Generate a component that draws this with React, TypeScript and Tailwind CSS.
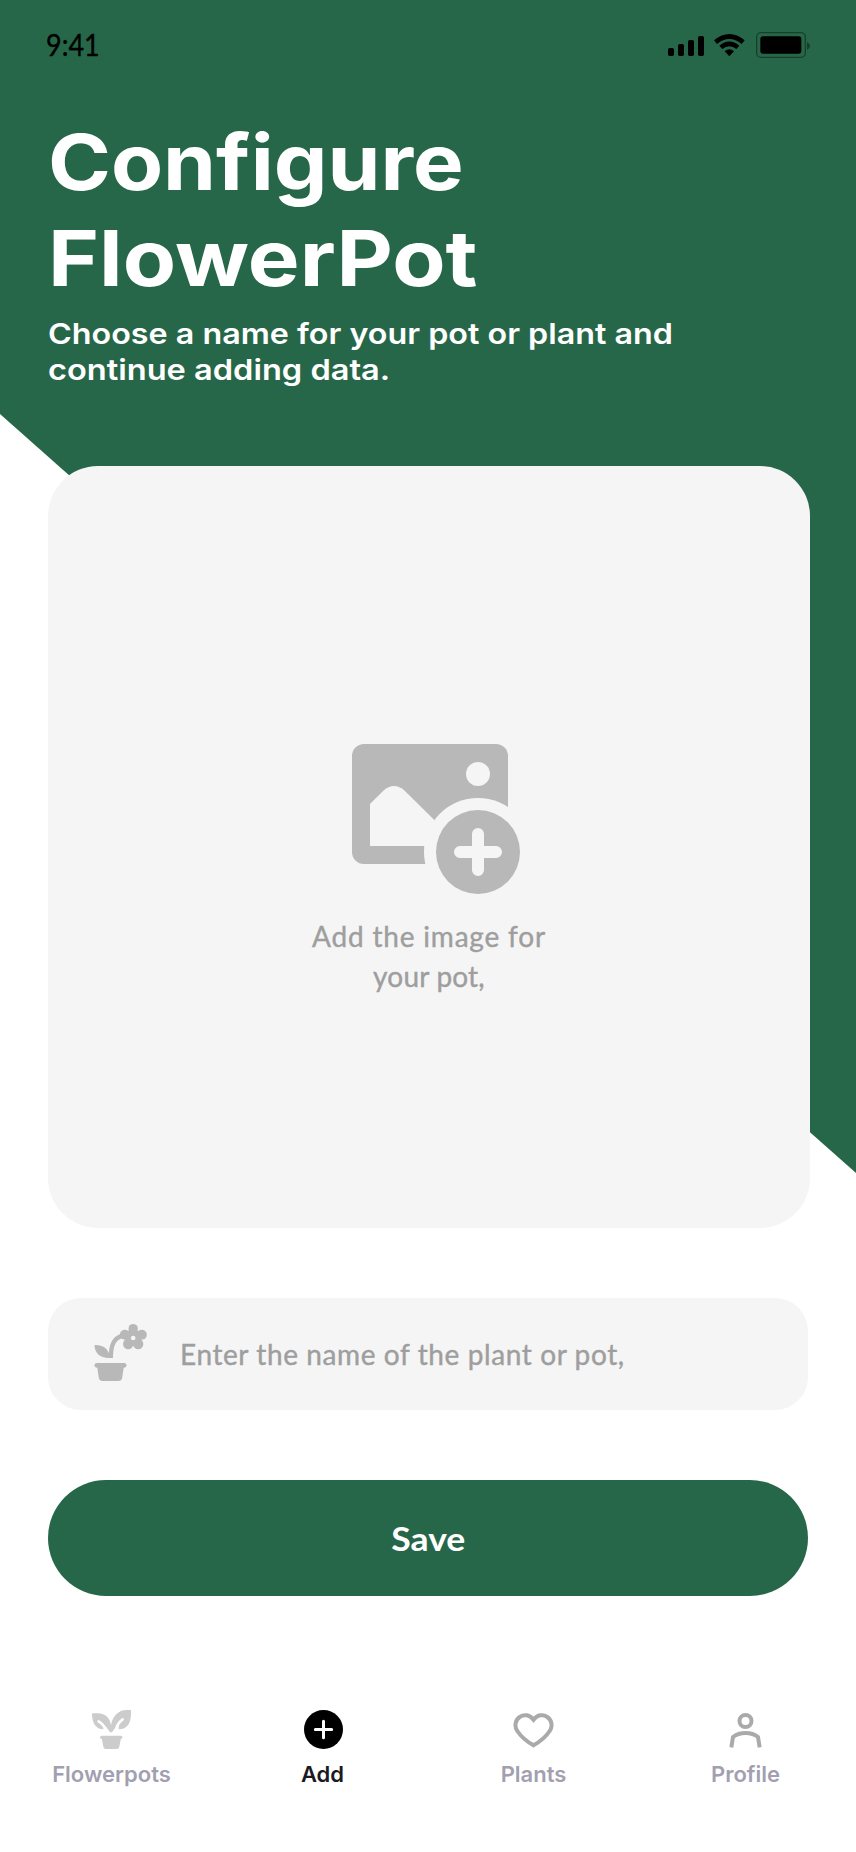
import type { ReactNode } from "react";

function StatusIcons() {
  return (
    <svg width="142" height="26" viewBox="54 36 426 78" aria-hidden="true">
      <rect x="54" y="84" width="18" height="24" rx="5" />
      <rect x="84" y="72" width="18" height="36" rx="5" />
      <rect x="114" y="60" width="18" height="48" rx="5" />
      <rect x="144" y="48" width="18" height="60" rx="5" />
      <path d="M192 61Q238 23 284 61L275 72Q238 42 201 72Z" />
      <path d="M208 77Q238 52 268 77L259 87Q238 71 217 87Z" />
      <path d="M224 94Q238 81 252 94L238 109Z" />
      <rect x="320" y="38" width="146" height="74" rx="13" fill="none" stroke="#000" strokeOpacity=".38" strokeWidth="4" />
      <rect x="331" y="49" width="123" height="52" rx="8" />
      <path d="M471 66Q480 70 480 78T471 90Z" opacity=".4" />
    </svg>
  );
}

function ImagePlusIcon() {
  return (
    <svg width="168" height="150" viewBox="0 0 504 450" aria-hidden="true">
      <rect width="468" height="360" rx="36" fill="#b8b8b8" />
      <circle cx="378" cy="90" r="36" fill="#f5f5f5" />
      <path d="M54 306V180L94 140Q126 112 158 140L247 228L270 306Z" fill="#f5f5f5" />
      <circle cx="378" cy="324" r="162" fill="#f5f5f5" />
      <circle cx="378" cy="324" r="126" fill="#b8b8b8" />
      <path d="M378 270V378M324 324H432" stroke="#f5f5f5" strokeWidth="36" strokeLinecap="round" />
    </svg>
  );
}

function FlowerIcon() {
  return (
    <svg className="-mt-[3px]" width="53" height="57" viewBox="0 0 158 171" fill="#b8b8b8" aria-hidden="true">
      <circle cx="117" cy="14" r="14" />
      <circle cx="143" cy="32" r="15" />
      <circle cx="132" cy="60" r="15.500" />
      <circle cx="102" cy="60" r="15.500" />
      <circle cx="92" cy="32" r="15" />
      <circle cx="117" cy="40" r="25" />
      <circle cx="117" cy="42" r="7" fill="#f5f5f5" />
      <path d="M50 102C50 64 58 42 86 35" fill="none" stroke="#b8b8b8" strokeWidth="13" />
      <path d="M1 63C30 62 46 78 47 102C18 103 1 87 1 63Z" />
      <rect x="1" y="117" width="96" height="14" rx="7" />
      <path d="M9 128H89L84 162Q82 171 73 171H25Q16 171 14 162Z" />
    </svg>
  );
}

function SproutIcon() {
  return (
    <svg width="39" height="39" viewBox="0 0 117 117" fill="#ccc" aria-hidden="true">
      <path d="M0 10H16C42 10 54 26 57 46V67H54C48 56 42 50 34 44V58C12 58 0 40 0 10Z" />
      <path d="M117 0V10C117 40 106 58 80 58V44C70 50 66 58 60 67H57V46C62 18 78 0 105 0Z" />
      <path d="M20 34Q33 41 41 56M92 28Q78 38 73 55" fill="none" stroke="#fff" strokeWidth="8" strokeLinecap="round" />
      <rect x="24" y="77" width="67" height="10" rx="5" />
      <path d="M29 84H87L82 110Q81 117 74 117H42Q35 117 34 110Z" />
    </svg>
  );
}

function AddIcon() {
  return (
    <svg className="ml-px" width="39" height="39" viewBox="0 0 117 117" aria-hidden="true">
      <circle cx="58.5" cy="58.5" r="58.5" />
      <path d="M58.5 34V83M34 58.5H83" stroke="#fff" strokeWidth="9" strokeLinecap="round" />
    </svg>
  );
}

function HeartIcon() {
  return (
    <svg className="mt-[3px]" width="41" height="35" viewBox="0 0 123 105" fill="none" stroke="#aaa" strokeWidth="12" aria-hidden="true">
      <path d="M61.500 20C50 5 33 3 20 12C7 21 3 40 13 54C22 68 39 84 61.500 97C84 84 101 68 110 54C120 40 116 21 103 12C90 3 73 5 61.500 20Z" />
    </svg>
  );
}

function PersonIcon() {
  return (
    <svg className="mt-[3px]" width="33" height="35" viewBox="0 0 99 105" fill="none" stroke="#aaa" strokeWidth="12" aria-hidden="true">
      <circle cx="49.500" cy="24" r="18" />
      <path d="M7 103L12 72C22 64 34 60 49.500 60S77 64 87 72L92 103" />
    </svg>
  );
}

function NavItem({ label, icon, active = false }: { label: string; icon: ReactNode; active?: boolean }) {
  return (
    <a className="flex w-[211px] flex-col items-center last:ml-px">
      <span className="flex h-[50px] items-start">{icon}</span>
      <span className={active ? "text-[22px] leading-7 font-semibold text-[#1b1b1f]" : "text-[22px] leading-7 font-semibold text-[#a2a0b0]"}>
        {label}
      </span>
    </a>
  );
}

export default function App() {
  return (
    <main className="relative flex h-[1852px] w-[856px] flex-col overflow-hidden bg-white font-['Inter',sans-serif]">
      <div className="absolute inset-x-0 top-0 h-[1173px] bg-[#276749] [clip-path:polygon(0_0,100%_0,100%_100%,0_414px)]" />

      <div className="relative flex h-[90px] items-start justify-between pt-[32px] pr-[46px] pl-[46px]">
        <span className="-mt-[8px] origin-left scale-x-[0.87] font-['Lato',sans-serif] text-[31px] leading-10 [-webkit-text-stroke:0.4px]">9:41</span>
        <StatusIcons />
      </div>

      <header className="relative h-[376px] px-12 pt-[24px] text-white">
        <h1 className="w-max text-[77px] leading-[96px] font-bold">
          <span className="block w-max origin-left scale-x-[1.105]">Configure</span>
          <span className="block w-max origin-left scale-x-[1.131]">FlowerPot</span>
        </h1>
        <p className="mt-[10px] w-max text-[29px] leading-9 font-semibold">
          <span className="block w-max origin-left scale-x-[1.113]">Choose a name for your pot or plant and</span>
          <span className="block w-max origin-left scale-x-[1.123]">continue adding data.</span>
        </p>
      </header>

      <button className="relative ml-12 flex h-[762px] w-[762px] flex-col items-center rounded-[50px] bg-[#f5f5f5] pt-[278px] font-['Lato',sans-serif]">
        <span className="ml-[14px]"><ImagePlusIcon /></span>
        <span className="mt-[22px] w-max text-[28px] leading-10 tracking-[0.8px] text-[#9e9e9e] [-webkit-text-stroke:0.4px]">
          Add the image for<br />
          <span className="tracking-[0.2px]">your pot,</span>
        </span>
      </button>

      <label className="relative mt-[70px] ml-12 flex h-[112px] w-[760px] items-center rounded-[33px] bg-[#f5f5f5] pl-[46px]">
        <FlowerIcon />
        <span className="ml-[33px] w-max font-['Lato',sans-serif] text-[28px] leading-10 tracking-[0.6px] text-[#9e9e9e] [-webkit-text-stroke:0.4px]">
          Enter the name of the plant or pot,
        </span>
      </label>

      <button className="relative mt-[70px] ml-12 flex h-[116px] w-[760px] items-center justify-center rounded-full bg-[#276749] pt-[2px] font-['Lato',sans-serif] text-[32px] font-bold text-white">
        <span className="scale-x-[1.11]">Save</span>
      </button>

      <nav className="mt-[114px] ml-[6px] flex">
        <NavItem label="Flowerpots" icon={<SproutIcon />} />
        <NavItem label="Add" icon={<AddIcon />} active />
        <NavItem label="Plants" icon={<HeartIcon />} />
        <NavItem label="Profile" icon={<PersonIcon />} />
      </nav>
    </main>
  );
}
